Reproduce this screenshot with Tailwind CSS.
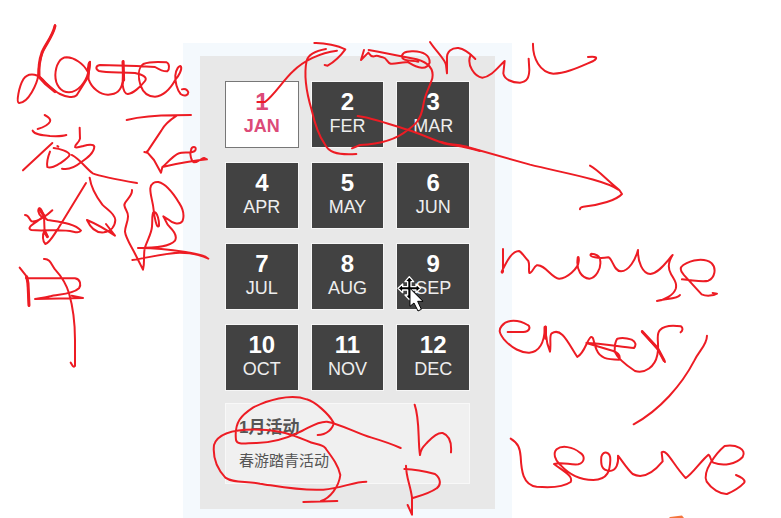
<!DOCTYPE html>
<html lang="zh-CN">
<head>
<meta charset="utf-8">
<meta name="viewport" content="width=device-width, initial-scale=1">
<title>1月活动</title>
<script src="https://cdn.jsdelivr.net/npm/@tailwindcss/browser@4"></script>
</head>
<body class="relative min-h-screen overflow-hidden bg-white pt-[43px] pl-[183px] font-['Liberation_Sans','Noto_Sans_CJK_SC',sans-serif]">
<main class="w-full max-w-[329px] bg-[#f4f9fd] px-[17px] pt-[13px] pb-[10px]">
  <section class="flex flex-col gap-3 bg-[#e8e8e8] p-[25px]">
    <div class="grid grid-cols-3 gap-x-3 gap-y-[14px] text-lg text-[#eeeeee]">
      <button type="button" class="border border-[#777777] bg-white pt-2 pb-[9px] font-bold text-[#dc4a78]"><span class="block text-2xl leading-6 font-bold">1</span><span class="block leading-6">JAN</span></button>
      <button type="button" class="border border-[#f6f6f6] bg-[#424242] pt-2 pb-[9px]"><span class="block text-2xl leading-6 font-bold text-white">2</span><span class="block leading-6">FER</span></button>
      <button type="button" class="border border-[#f6f6f6] bg-[#424242] pt-2 pb-[9px]"><span class="block text-2xl leading-6 font-bold text-white">3</span><span class="block leading-6">MAR</span></button>
      <button type="button" class="border border-[#f6f6f6] bg-[#424242] pt-2 pb-[9px]"><span class="block text-2xl leading-6 font-bold text-white">4</span><span class="block leading-6">APR</span></button>
      <button type="button" class="border border-[#f6f6f6] bg-[#424242] pt-2 pb-[9px]"><span class="block text-2xl leading-6 font-bold text-white">5</span><span class="block leading-6">MAY</span></button>
      <button type="button" class="border border-[#f6f6f6] bg-[#424242] pt-2 pb-[9px]"><span class="block text-2xl leading-6 font-bold text-white">6</span><span class="block leading-6">JUN</span></button>
      <button type="button" class="border border-[#f6f6f6] bg-[#424242] pt-2 pb-[9px]"><span class="block text-2xl leading-6 font-bold text-white">7</span><span class="block leading-6">JUL</span></button>
      <button type="button" class="border border-[#f6f6f6] bg-[#424242] pt-2 pb-[9px]"><span class="block text-2xl leading-6 font-bold text-white">8</span><span class="block leading-6">AUG</span></button>
      <button type="button" class="border border-[#f6f6f6] bg-[#424242] pt-2 pb-[9px]"><span class="block text-2xl leading-6 font-bold text-white">9</span><span class="block leading-6">SEP</span></button>
      <button type="button" class="border border-[#f6f6f6] bg-[#424242] pt-2 pb-[9px]"><span class="block text-2xl leading-6 font-bold text-white">10</span><span class="block leading-6">OCT</span></button>
      <button type="button" class="border border-[#f6f6f6] bg-[#424242] pt-2 pb-[9px]"><span class="block text-2xl leading-6 font-bold text-white">11</span><span class="block leading-6">NOV</span></button>
      <button type="button" class="border border-[#f6f6f6] bg-[#424242] pt-2 pb-[9px]"><span class="block text-2xl leading-6 font-bold text-white">12</span><span class="block leading-6">DEC</span></button>
    </div>
    <article class="flex flex-col gap-[7px] border border-[#f8f8f8] bg-[#f0f0f0] px-[13px] pt-3 pb-2 text-[#555555]">
      <h2 class="text-[17px] leading-6 font-bold">1月活动</h2>
      <p class="text-[15px] leading-7">春游踏青活动</p>
    </article>
  </section>
</main>

<!-- Pen annotations over the page -->
<svg class="pointer-events-none absolute top-0 left-0 h-[518px] w-[781px]" viewBox="0 0 781 518" aria-hidden="true" fill="none" stroke="#ed1c24" stroke-width="6" stroke-linecap="round" stroke-linejoin="round">
  <path d="M669 518L670 517L682 515.5L684 518Z" fill="#f4743b" stroke="none"/>
  <!-- mouse pointer -->
  <g transform="translate(380 230) scale(.3333)">
    <path d="M88 140L101 155H93V170H108V162L122 175L108 188V180H93V195H101L88 209L75 195H83V180H68V188L54 175L68 162V170H83V155H75Z" fill="#000" stroke="#fff" stroke-width="4"/>
    <path d="M90 176V229L102 219L114 243L124 238L113 214H128Z" fill="#fff" stroke="#000" stroke-width="3"/>
  </g>
  <g transform="translate(0 10) scale(.3333)">
    <path d="M165 45C165 65 145 90 130 120C120 145 116 170 115 195C112 220 85 280 57 279C48 277 57 230 70 208C82 188 108 190 124 205C145 225 160 242 180 252C200 262 222 264 230 256L265 200L270 157"/>
    <path d="M165 48C158 80 135 105 126 128C118 150 116 180 117 200L135 220L165 245" stroke-width="9"/>
    <path d="M263 185C250 160 223 143 200 142C180 142 167 165 166 195C166 225 182 247 207 247C235 246 258 215 264 190C263 170 264 157 270 155C272 175 262 190 266 208C275 235 302 255 325 254C350 253 363 243 368 215L370 153"/>
    <path d="M369 155L371 200L368 225C370 240 376 253 384 252C400 250 422 230 435 213C443 203 430 194 405 189C375 185 320 190 297 183C287 178 285 168 300 165L410 168L465 171C480 180 492 185 502 184C510 177 508 160 500 157C475 155 445 156 430 162C412 175 415 205 422 227C430 250 445 260 465 260C495 258 515 230 527 208C536 198 547 178 543 170C538 163 527 180 526 197C525 215 531 240 542 252C555 262 565 254 565 247C562 237 553 235 546 238"/>
    <path d="M369 155L371 210" stroke-width="9"/>
    <path d="M134 315C148 322 153 328 150 335C145 345 128 353 113 357M98 362C105 374 125 376 150 378C170 379 190 378 199 375M69 481L157 399M175 410L172 408M150 425C144 440 140 460 142 471C150 476 170 468 180 460C195 450 208 442 209 434C205 424 180 416 161 414M239 353L240 386C238 398 223 405 225 411C229 415 240 411 250 408C265 404 280 402 283 410C282 430 260 445 243 457C225 472 205 480 186 476M215 435C240 448 258 475 278 490C305 500 360 510 411 519"/>
    <path d="M380 330C430 318 480 316 525 316L573 315M530 317C510 330 490 350 484 362L440 428L433 426M440 425L462 450L483 488L487 472C500 460 522 435 537 430C550 425 578 432 586 421C592 408 575 407 573 420C568 435 575 455 582 457C597 457 603 445 612 444L621 448C580 452 530 461 487 471"/>
  </g>
  <g transform="translate(0 170) scale(.3333)">
    <path d="M75 135C88 135 87 150 95 154C110 157 140 138 157 121M125 140C113 130 112 115 120 115C128 118 129 145 143 150C180 156 225 160 243 182C240 188 228 187 220 185C180 175 135 185 94 180C80 175 95 165 110 155L132 138L134 190L143 200M134 180C126 195 128 215 136 222C150 218 162 193 175 175L258 39"/>
    <path d="M118 117L134 140M135 185L142 200" stroke-width="9"/>
    <path d="M269 23C272 45 285 75 307 104C320 118 345 130 346 150C345 170 332 184 312 187C285 190 270 170 261 150C285 160 320 180 345 197L318 162"/>
    <path d="M396 60C398 80 375 90 373 105C375 120 385 125 384 140C384 155 375 170 375 185C377 205 395 230 407 255L429 299C435 275 430 260 434 235C442 210 455 190 456 170C458 150 455 130 461 125C473 125 478 155 477 168C470 178 463 140 461 120C459 95 450 75 451 55C453 40 465 35 475 36C500 42 520 70 537 98C548 115 554 135 548 152C538 168 515 158 504 148L490 139C498 150 497 160 510 172C525 187 532 200 525 212C510 230 470 234 414 234C480 233 530 242 570 248C595 252 615 257 625 266C600 254 570 248 540 248C490 249 440 265 397 270"/>
    <path d="M59 293L78 317L83 335L87 408M78 324L225 325C242 328 244 345 237 355C215 376 170 372 150 379C135 383 115 385 105 387L249 384L215 377M132 267C150 265 155 285 165 298C185 320 200 345 207 370C220 415 225 470 225 510V588C220 595 215 582 212 578"/>
    <path d="M80 320L84 340L87 406" stroke-width="9"/>
  </g>
  <g transform="translate(180 30) scale(.3333)">
    <path d="M232 216H255C285 193 310 150 340 123C370 93 420 68 471 62M403 39C435 38 475 47 496 58C480 80 460 97 443 107L434 105M438 57C405 63 385 73 380 92C370 140 383 200 395 240C403 275 415 315 433 340C445 365 465 376 529 372"/>
  </g>
  <g transform="translate(300 30) scale(.3333)">
    <path d="M192 60L183 90L205 68C210 75 213 81 222 79C235 74 238 81 248 82C262 84 260 98 272 101C290 103 305 94 325 97C355 115 380 122 389 98C390 75 370 65 340 64C312 63 303 72 307 84C315 95 335 90 355 95M206 60C260 70 320 82 350 88C385 98 402 118 397 145C388 175 375 190 370 225C363 270 345 285 323 300C290 328 245 342 180 345L156 355M173 258C210 262 260 280 325 300C370 314 410 335 440 342C475 348 500 350 540 363M390 36C405 60 437 90 438 105L441 130V85C440 65 455 53 475 54C500 58 515 76 526 87"/>
  </g>
  <g transform="translate(440 20) scale(.3333)">
    <path d="M92 105C78 135 105 170 127 173C155 170 175 140 194 123L190 160C193 178 215 188 240 188C262 186 267 172 268 150L266 116M279 71C278 115 300 157 340 161C380 160 420 140 460 123C475 113 470 108 444 111M0 365C30 375 60 374 85 382L270 434C360 457 490 478 535 509M450 437C475 450 500 480 538 510L546 522C530 540 480 556 430 560C422 561 420 563 420 568"/>
  </g>
  <g transform="translate(480 220) scale(.3333)">
    <path d="M69 87V155C66 160 65 158 65 155C80 125 95 93 117 93C125 96 132 110 145 123C150 135 145 150 148 159C158 160 160 140 170 136C195 132 215 175 237 176C260 177 295 145 296 125C298 110 293 107 293 115C288 150 305 174 328 176C348 175 363 145 361 125C361 107 345 101 334 101C328 106 333 110 345 112C360 115 378 113 385 112C398 115 400 153 423 154C447 153 466 120 474 90C473 125 488 162 511 162C538 160 563 120 578 105C565 125 563 145 573 162C583 180 592 190 587 207C580 225 555 240 531 243C555 235 592 238 600 225M606 178C640 180 665 187 685 182C705 173 710 145 695 130C675 113 635 118 610 135C600 142 599 150 611 164C630 185 648 205 665 223C680 230 700 227 711 221L698 219"/>
  </g>
  <g transform="translate(480 300) scale(.3333)">
    <path d="M83 96H130C150 95 152 80 143 75C115 58 82 57 65 78C55 90 58 100 72 118C95 145 125 159 148 158C178 156 193 130 195 82C199 75 198 83 198 105C200 130 205 143 210 155C214 130 207 106 215 100C245 80 265 130 292 171C315 158 320 120 333 111C342 108 340 130 350 150C360 175 380 178 418 179C423 165 412 158 400 153L319 129C360 130 420 140 462 144C470 135 467 125 455 119C440 114 425 113 412 116C402 130 405 145 404 155C415 180 445 200 465 213C495 222 525 200 532 165C540 130 525 105 540 90C553 76 583 76 603 79C610 84 608 92 602 97M486 94L535 150L555 186M681 107C681 135 658 150 643 182C605 255 540 330 461 373"/>
    <path d="M195 82L197 115M487 95L533 145L552 181" stroke-width="9"/>
  </g>
  <g transform="translate(490 420) scale(.3333)">
    <path d="M62 56C85 70 90 85 92 110C94 150 98 195 140 200C175 203 218 203 242 186C252 168 215 150 192 132C220 125 240 136 265 133C285 127 286 108 270 98C248 80 215 75 200 88C188 100 195 120 210 134C240 165 268 180 310 180C355 179 360 150 361 120C362 95 340 90 334 110C332 135 335 151 358 153C380 152 386 130 384 107C395 120 410 145 428 162C460 179 490 158 518 124L515 97C530 85 550 135 587 174C605 165 635 120 656 104C665 112 658 118 670 128C700 139 738 133 758 111C772 88 738 72 704 78C680 98 635 155 650 185C665 207 690 223 711 222C735 212 750 202 763 188C768 178 750 170 738 165"/>
  </g>
  <g transform="translate(190 390) scale(.3333)">
    <path d="M383 135C410 135 430 115 431 98C415 70 375 35 350 28C300 10 230 32 190 52C155 75 132 95 138 150C142 166 165 159 200 159C255 158 290 145 325 128C355 116 380 93 411 95C455 103 500 130 545 143C575 152 600 160 632 174M529 275C490 275 455 295 400 299C330 303 270 290 210 281C165 273 130 280 106 263C80 235 68 200 72 165C85 125 150 117 210 119C270 120 305 134 350 152C375 165 393 160 405 173C425 200 445 225 451 255C447 290 420 325 393 333M340 336L442 333"/>
  </g>
  <g transform="translate(330 390) scale(.3333)">
    <path d="M254 44C270 90 263 150 270 195C273 175 280 170 293 156C310 138 325 127 338 129C360 137 365 160 363 187M228 227C228 260 242 290 246 323V374L233 345M223 237C260 238 290 245 315 252C333 265 334 285 320 295C300 310 270 318 246 325"/>
  </g>
</svg>
</body>
</html>
